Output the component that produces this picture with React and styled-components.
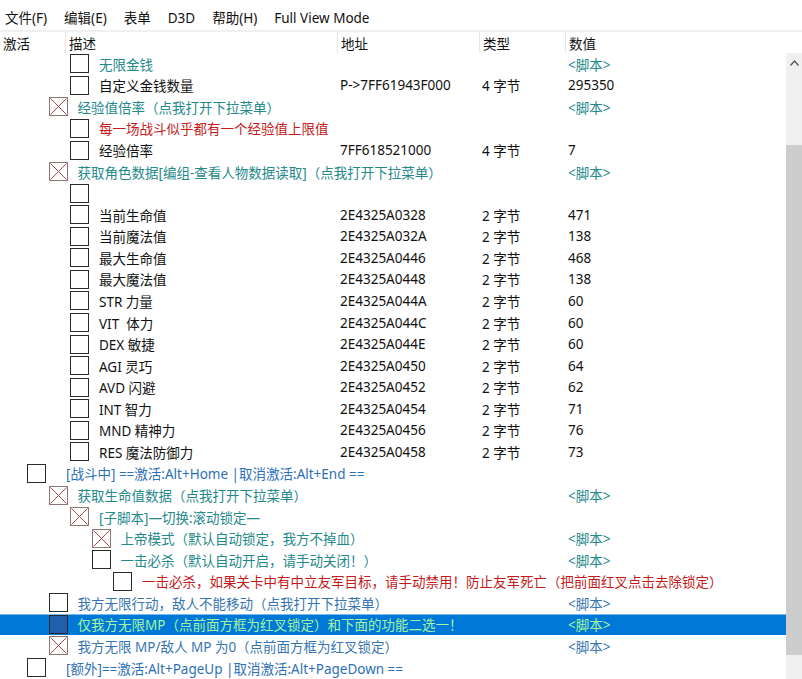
import React from 'react';
import styled, { createGlobalStyle } from 'styled-components';

const GlobalStyle = createGlobalStyle`
  html, body {
    margin: 0;
    padding: 0;
    background: #ffffff;
  }
  body {
    font-family: "Noto Sans", "Noto Sans CJK SC", sans-serif;
    font-size: 13.5px;
    color: #111;
  }
`;

const Window = styled.div`
  width: 802px;
  height: 679px;
  overflow: hidden;
  display: flex;
  flex-direction: column;
  background: #fff;
`;

const MenuBar = styled.div`
  height: 32px;
  display: flex;
  align-items: center;
  padding: 8px 0 0 5px;
  box-sizing: border-box;
  gap: 17px;
  font-size: 13.5px;
  border-bottom: 2px solid #f0f0f0;
  flex: none;
`;

const MenuItem = styled.span`
  line-height: 1;
`;

const Header = styled.div`
  height: 21px;
  display: flex;
  align-items: center;
  flex: none;
`;

const HeadCell = styled.div`
  width: ${p => p.$w}px;
  flex: none;
  height: 100%;
  display: flex;
  align-items: center;
  padding-left: 3px;
  box-sizing: border-box;
  border-left: ${p => (p.$first ? 'none' : '1px solid #e8e8e8')};
`;

const Body = styled.div`
  flex: 1;
  display: flex;
  min-height: 0;
`;

const List = styled.div`
  flex: 1;
  display: flex;
  flex-direction: column;
`;

const Row = styled.div`
  height: 21.57px;
  display: flex;
  align-items: center;
  flex: none;
  background: ${p => (p.$selected ? '#0078d7' : 'transparent')};
  box-shadow: ${p => (p.$selected ? 'inset 0 1px 0 #7ab8ea' : 'none')};
`;

const TreeCell = styled.div`
  width: 337px;
  flex: none;
  min-width: 0;
  display: flex;
  align-items: center;
  white-space: pre;
  overflow: visible;
  box-sizing: border-box;
  padding-left: ${p => 27 + p.$level * 21.5}px;
`;

const Box = styled.div`
  width: 19px;
  height: 19px;
  flex: none;
  box-sizing: border-box;
  border: 1px solid ${p => (p.$checked ? '#8c7676' : '#2a2a2a')};
  background: ${p => (p.$selected ? '#1f5fae' : '#fff')};
  margin-right: ${p => (p.$root ? 20 : 10)}px;
  display: flex;
`;

const Label = styled.span`
  color: ${p => p.$color};
  position: relative;
  z-index: 1;
`;

const Cell = styled.div`
  width: ${p => p.$w}px;
  flex: none;
  padding-left: 3px;
  box-sizing: border-box;
  white-space: nowrap;
  color: ${p => p.$color || '#111'};
`;

const Scrollbar = styled.div`
  width: 16px;
  flex: none;
  display: flex;
  flex-direction: column;
  background: #f0f0f0;
`;

const ScrollButton = styled.div`
  height: 20px;
  display: flex;
  align-items: center;
  justify-content: center;
`;

const ScrollTrack = styled.div`
  height: ${p => p.$h}px;
  flex: none;
`;

const Thumb = styled.div`
  height: 510px;
  flex: none;
  background: #cdcdcd;
`;

const TEAL = '#24898a';
const BLUE = '#2e70b6';
const BLUE2 = '#3675b0';
const RED = '#c41a1a';
const HL = '#a6f5a0';

const SCRIPT = '<脚本>';

const rows = [
  { level: 2, text: '无限金钱', color: TEAL, value: SCRIPT, vcolor: TEAL },
  { level: 2, text: '自定义金钱数量', addr: 'P->7FF61943F000', type: '4 字节', value: '295350' },
  { level: 1, checked: true, text: '经验值倍率（点我打开下拉菜单）', color: TEAL, value: SCRIPT, vcolor: TEAL },
  { level: 2, text: '每一场战斗似乎都有一个经验值上限值', color: RED },
  { level: 2, text: '经验倍率', addr: '7FF618521000', type: '4 字节', value: '7' },
  { level: 1, checked: true, text: '获取角色数据[编组-查看人物数据读取]（点我打开下拉菜单）', color: TEAL, value: SCRIPT, vcolor: TEAL },
  { level: 2, text: '' },
  { level: 2, text: '当前生命值', addr: '2E4325A0328', type: '2 字节', value: '471' },
  { level: 2, text: '当前魔法值', addr: '2E4325A032A', type: '2 字节', value: '138' },
  { level: 2, text: '最大生命值', addr: '2E4325A0446', type: '2 字节', value: '468' },
  { level: 2, text: '最大魔法值', addr: '2E4325A0448', type: '2 字节', value: '138' },
  { level: 2, text: 'STR 力量', addr: '2E4325A044A', type: '2 字节', value: '60' },
  { level: 2, text: 'VIT  体力', addr: '2E4325A044C', type: '2 字节', value: '60' },
  { level: 2, text: 'DEX 敏捷', addr: '2E4325A044E', type: '2 字节', value: '60' },
  { level: 2, text: 'AGI 灵巧', addr: '2E4325A0450', type: '2 字节', value: '64' },
  { level: 2, text: 'AVD 闪避', addr: '2E4325A0452', type: '2 字节', value: '62' },
  { level: 2, text: 'INT 智力', addr: '2E4325A0454', type: '2 字节', value: '71' },
  { level: 2, text: 'MND 精神力', addr: '2E4325A0456', type: '2 字节', value: '76' },
  { level: 2, text: 'RES 魔法防御力', addr: '2E4325A0458', type: '2 字节', value: '73' },
  { level: 0, text: '[战斗中] ==激活:Alt+Home |取消激活:Alt+End ==', color: BLUE },
  { level: 1, checked: true, text: '获取生命值数据（点我打开下拉菜单）', color: TEAL, value: SCRIPT, vcolor: TEAL },
  { level: 2, checked: true, text: '[子脚本]—切换:滚动锁定—', color: TEAL },
  { level: 3, checked: true, text: '上帝模式（默认自动锁定，我方不掉血）', color: TEAL, value: SCRIPT, vcolor: TEAL },
  { level: 3, text: '一击必杀（默认自动开启，请手动关闭！）', color: TEAL, value: SCRIPT, vcolor: TEAL },
  { level: 4, text: '一击必杀，如果关卡中有中立友军目标，请手动禁用！防止友军死亡（把前面红叉点击去除锁定）', color: RED },
  { level: 1, text: '我方无限行动，敌人不能移动（点我打开下拉菜单）', color: BLUE2, value: SCRIPT, vcolor: BLUE2 },
  { level: 1, selected: true, text: '仅我方无限MP（点前面方框为红叉锁定）和下面的功能二选一！', color: HL, value: SCRIPT, vcolor: HL },
  { level: 1, checked: true, text: '我方无限 MP/敌人 MP 为0（点前面方框为红叉锁定）', color: BLUE2, value: SCRIPT, vcolor: BLUE2 },
  { level: 0, text: '[额外]==激活:Alt+PageUp |取消激活:Alt+PageDown ==', color: BLUE },
];

const Cross = () => (
  <svg width="17" height="17" viewBox="0 0 17 17">
    <line x1="0.5" y1="0.5" x2="16.5" y2="16.5" stroke="#b04a48" strokeWidth="1" />
    <line x1="16.5" y1="0.5" x2="0.5" y2="16.5" stroke="#b04a48" strokeWidth="1" />
  </svg>
);

export default function App() {
  return (
    <Window>
      <GlobalStyle />
      <MenuBar>
        <MenuItem>文件(F)</MenuItem>
        <MenuItem>编辑(E)</MenuItem>
        <MenuItem>表单</MenuItem>
        <MenuItem>D3D</MenuItem>
        <MenuItem>帮助(H)</MenuItem>
        <MenuItem>Full View Mode</MenuItem>
      </MenuBar>
      <Header>
        <HeadCell $w={65} $first>激活</HeadCell>
        <HeadCell $w={272}>描述</HeadCell>
        <HeadCell $w={142}>地址</HeadCell>
        <HeadCell $w={86}>类型</HeadCell>
        <HeadCell $w={150}>数值</HeadCell>
      </Header>
      <Body>
        <List>
          {rows.map((r, i) => (
            <Row key={i} $selected={r.selected}>
              <TreeCell $level={r.level}>
                <Box $checked={r.checked} $selected={r.selected} $root={r.level === 0}>
                  {r.checked && <Cross />}
                </Box>
                <Label $color={r.color || '#111'}>{r.text}</Label>
              </TreeCell>
              <Cell $w={142}>{r.addr}</Cell>
              <Cell $w={86}>{r.type}</Cell>
              <Cell $w={150} $color={r.vcolor}>{r.value}</Cell>
            </Row>
          ))}
        </List>
        <Scrollbar>
          <ScrollButton>
            <svg width="9" height="6" viewBox="0 0 9 6">
              <polyline points="0.5,5.5 4.5,1 8.5,5.5" fill="none" stroke="#555" strokeWidth="1.3" />
            </svg>
          </ScrollButton>
          <ScrollTrack $h={72} />
          <Thumb />
        </Scrollbar>
      </Body>
    </Window>
  );
}
